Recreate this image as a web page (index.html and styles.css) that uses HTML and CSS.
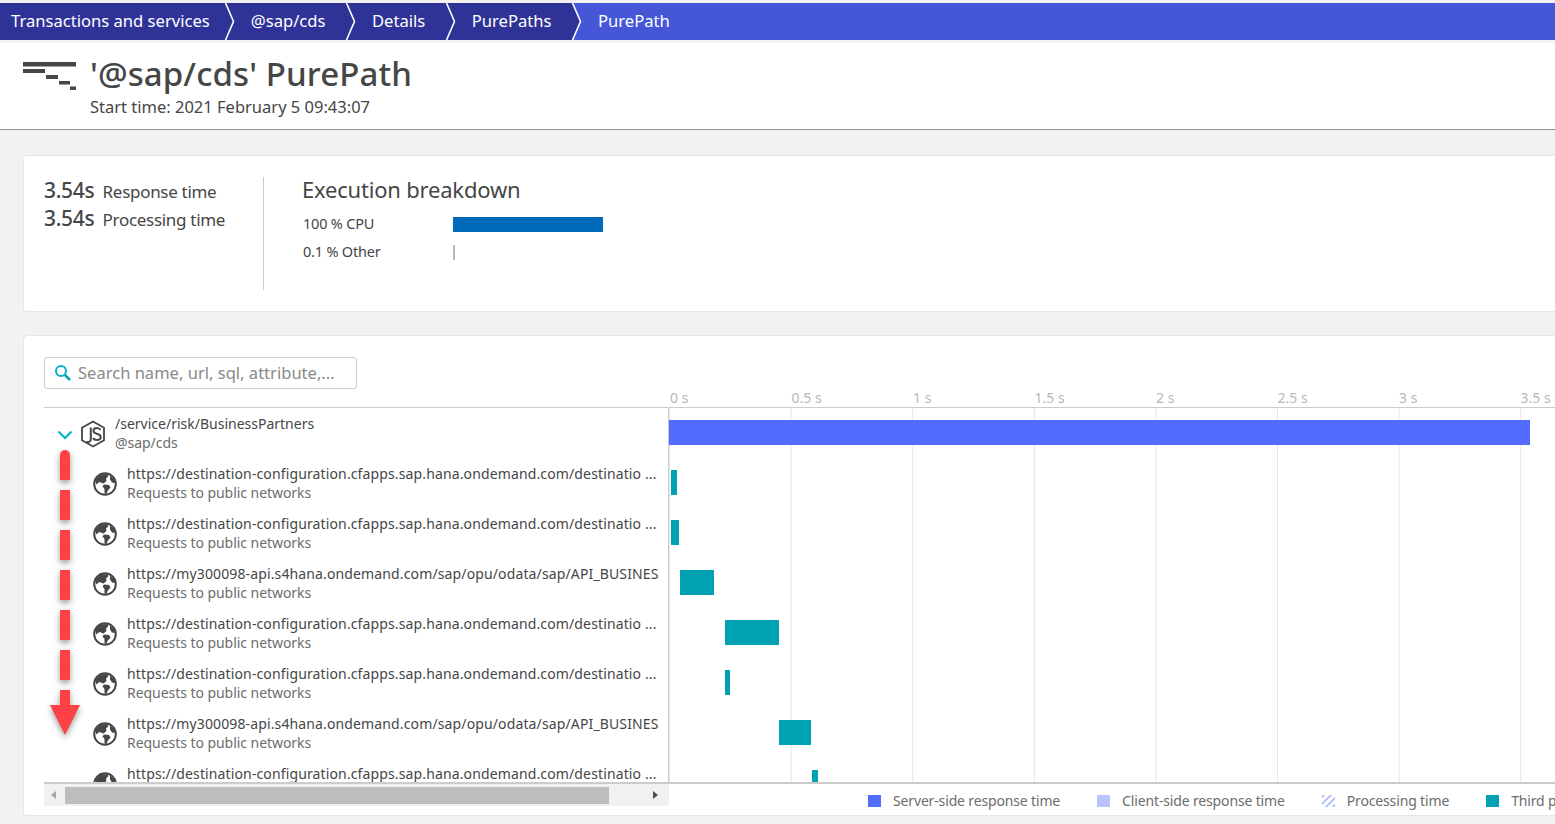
FILE: index.html
```html
<!DOCTYPE html>
<html lang="en">
<head>
    <meta charset="UTF-8">
    <meta name="viewport" content="width=device-width, initial-scale=1.0">
    <title>PurePath</title>
    <link rel="stylesheet" href="styles.css">
</head>
<body>
    <svg class="defs" width="0" height="0">
        <symbol id="globe" viewBox="0 0 24 24">
            <circle cx="12" cy="12" r="10.8" fill="#fff" stroke="#454646" stroke-width="2"/>
            <path fill="#454646" d="M8 2.5 L14 2 L15.5 4 L13 6.5 L13.5 9 L10.5 11.5 L6.5 10 L3 12.5 L2.5 8 L5 4.5Z M11 12.5 L16 13 L17.5 15.5 L14.5 19 L13.5 22 L11.5 21.5 L11.5 17 L9.5 14.5Z M17 3.5 L21 7 L22 11 L19 10.5 L17 7.5Z"/>
        </symbol>
        <symbol id="crumb-sep" viewBox="0 0 11 37">
            <path d="M0 0 H1.5 L9.5 18.5 L1.5 37 H0Z" fill="#2f3398"/>
            <path d="M1.5 0 L9.5 18.5 L1.5 37" fill="none" stroke="#fff" stroke-width="1.6"/>
        </symbol>
    </svg>

    <nav class="breadcrumb">
        <a class="crumb first">Transactions and services</a>
        <svg class="crumb-sep" width="11" height="37"><use href="#crumb-sep"/></svg>
        <a class="crumb">@sap/cds</a>
        <svg class="crumb-sep" width="11" height="37"><use href="#crumb-sep"/></svg>
        <a class="crumb">Details</a>
        <svg class="crumb-sep" width="11" height="37"><use href="#crumb-sep"/></svg>
        <a class="crumb">PurePaths</a>
        <svg class="crumb-sep last" width="11" height="37"><use href="#crumb-sep"/></svg>
        <a class="crumb current">PurePath</a>
    </nav>

    <header class="page-header">
        <svg class="header-icon" width="54" height="30" viewBox="0 0 54 30">
            <rect x="0" y="0" width="53" height="4.5" fill="#454646"/>
            <rect x="0" y="7" width="22" height="4" fill="#454646"/>
            <rect x="23" y="13" width="12" height="4" fill="#454646"/>
            <rect x="36" y="19" width="11" height="3.5" fill="#454646"/>
            <rect x="47" y="24.5" width="6" height="3.5" fill="#454646"/>
        </svg>
        <div>
            <h1>'@sap/cds' PurePath</h1>
            <p class="start-time">Start time: 2021 February 5 09:43:07</p>
        </div>
    </header>

    <main class="content">
        <section class="card summary">
            <div class="times">
                <div class="time-row"><b>3.54s</b> Response time</div>
                <div class="time-row"><b>3.54s</b> Processing time</div>
            </div>
            <div class="breakdown">
                <h2>Execution breakdown</h2>
                <div class="breakdown-row">
                    <span class="breakdown-label">100 % CPU</span>
                    <span class="breakdown-bar cpu"></span>
                </div>
                <div class="breakdown-row">
                    <span class="breakdown-label">0.1 % Other</span>
                    <span class="breakdown-bar other"></span>
                </div>
            </div>
        </section>

        <section class="card tree-card">
            <div class="search">
                <svg width="18" height="18" viewBox="0 0 18 18">
                    <circle cx="7" cy="7" r="5" fill="none" stroke="#00b4c8" stroke-width="2"/>
                    <path d="M10.8 10.8 L16 16" stroke="#00a1b2" stroke-width="2.6"/>
                </svg>
                <span>Search name, url, sql, attribute,...</span>
            </div>

            <div class="tree-head">
                <div class="axis">
                    <span>0 s</span><span>0.5 s</span><span>1 s</span><span>1.5 s</span>
                    <span>2 s</span><span>2.5 s</span><span>3 s</span><span>3.5 s</span>
                </div>
            </div>

            <div class="tree">
                <div class="row root">
                    <div class="row-info">
                        <svg class="chevron" width="16" height="10" viewBox="0 0 16 10">
                            <path d="M1.5 1.5 L8 8 L14.5 1.5" fill="none" stroke="#00b4c8" stroke-width="2"/>
                        </svg>
                        <svg class="js-icon" width="26" height="28" viewBox="0 0 26 28">
                            <path d="M13 1.5 L24 7.7 L24 20.3 L13 26.5 L2 20.3 L2 7.7Z" fill="none" stroke="#454646" stroke-width="1.8"/>
                            <path d="M10.8 7.5 V19 Q10.8 22.5 6.5 22" fill="none" stroke="#454646" stroke-width="2"/>
                            <path d="M20.5 10 Q19.5 8 16.8 8 Q13.5 8 13.5 10.8 Q13.5 13 16.8 13.8 Q20.7 14.6 20.7 17.2 Q20.7 20 16.8 20 Q14 20 13 18" fill="none" stroke="#454646" stroke-width="2"/>
                        </svg>
                        <div class="row-text">
                            <div class="row-title">/service/risk/BusinessPartners</div>
                            <div class="row-sub">@sap/cds</div>
                        </div>
                    </div>
                    <div class="row-chart"><span class="bar server" style="margin-left: 0px; width: 861px"></span></div>
                </div>

                <div class="row">
                    <div class="row-info">
                        <svg class="globe" width="24" height="24"><use href="#globe"/></svg>
                        <div class="row-text">
                            <div class="row-title url">https://destination-configuration.cfapps.sap.hana.ondemand.com/destinatio ...</div>
                            <div class="row-sub">Requests to public networks</div>
                        </div>
                    </div>
                    <div class="row-chart"><span class="bar third" style="margin-left: 2px; width: 6px"></span></div>
                </div>

                <div class="row">
                    <div class="row-info">
                        <svg class="globe" width="24" height="24"><use href="#globe"/></svg>
                        <div class="row-text">
                            <div class="row-title url">https://destination-configuration.cfapps.sap.hana.ondemand.com/destinatio ...</div>
                            <div class="row-sub">Requests to public networks</div>
                        </div>
                    </div>
                    <div class="row-chart"><span class="bar third" style="margin-left: 2px; width: 8px"></span></div>
                </div>

                <div class="row">
                    <div class="row-info">
                        <svg class="globe" width="24" height="24"><use href="#globe"/></svg>
                        <div class="row-text">
                            <div class="row-title url">https://my300098-api.s4hana.ondemand.com/sap/opu/odata/sap/API_BUSINES</div>
                            <div class="row-sub">Requests to public networks</div>
                        </div>
                    </div>
                    <div class="row-chart"><span class="bar third" style="margin-left: 11px; width: 34px"></span></div>
                </div>

                <div class="row">
                    <div class="row-info">
                        <svg class="globe" width="24" height="24"><use href="#globe"/></svg>
                        <div class="row-text">
                            <div class="row-title url">https://destination-configuration.cfapps.sap.hana.ondemand.com/destinatio ...</div>
                            <div class="row-sub">Requests to public networks</div>
                        </div>
                    </div>
                    <div class="row-chart"><span class="bar third" style="margin-left: 56px; width: 54px"></span></div>
                </div>

                <div class="row">
                    <div class="row-info">
                        <svg class="globe" width="24" height="24"><use href="#globe"/></svg>
                        <div class="row-text">
                            <div class="row-title url">https://destination-configuration.cfapps.sap.hana.ondemand.com/destinatio ...</div>
                            <div class="row-sub">Requests to public networks</div>
                        </div>
                    </div>
                    <div class="row-chart"><span class="bar third" style="margin-left: 56px; width: 5px"></span></div>
                </div>

                <div class="row">
                    <div class="row-info">
                        <svg class="globe" width="24" height="24"><use href="#globe"/></svg>
                        <div class="row-text">
                            <div class="row-title url">https://my300098-api.s4hana.ondemand.com/sap/opu/odata/sap/API_BUSINES</div>
                            <div class="row-sub">Requests to public networks</div>
                        </div>
                    </div>
                    <div class="row-chart"><span class="bar third" style="margin-left: 110px; width: 32px"></span></div>
                </div>

                <!-- last row is cut by the scroll area, only its title shows -->
                <div class="row">
                    <div class="row-info">
                        <svg class="globe" width="24" height="24"><use href="#globe"/></svg>
                        <div class="row-text">
                            <div class="row-title url">https://destination-configuration.cfapps.sap.hana.ondemand.com/destinatio ...</div>
                        </div>
                    </div>
                    <div class="row-chart"><span class="bar third" style="margin-left: 143px; width: 6px"></span></div>
                </div>
            </div>

            <div class="tree-foot">
                <div class="scrollbar">
                    <span class="scroll-arrow left"></span>
                    <span class="scroll-thumb"></span>
                    <span class="scroll-arrow right"></span>
                </div>
                <div class="legend">
                    <span class="legend-item"><i class="swatch server"></i>Server-side response time</span>
                    <span class="legend-item"><i class="swatch client"></i>Client-side response time</span>
                    <span class="legend-item"><i class="swatch processing"></i>Processing time</span>
                    <span class="legend-item"><i class="swatch third"></i>Third p</span>
                </div>
            </div>
        </section>
    </main>

    <!-- Red arrow annotation drawn over the tree -->
    <svg class="annotation" width="50" height="300" viewBox="0 0 50 300">
        <g fill="#ff4045">
            <path d="M10 35 V10 A5 5 0 0 1 20 10 V35Z"/>
            <rect x="10" y="45" width="10" height="30"/>
            <rect x="10" y="85" width="10" height="30"/>
            <rect x="10" y="125" width="10" height="30"/>
            <rect x="10" y="165" width="10" height="30"/>
            <rect x="10" y="205" width="10" height="30"/>
            <path d="M10 245 H20 V260 H30 L15 290 L0 260 H10Z"/>
        </g>
    </svg>
</body>
</html>
```

FILE: styles.css
```css
body {
    margin: 0;
    height: 824px;
    overflow: hidden;
    background-color: #f2f2f2;
    font-family: "Noto Sans", "Open Sans", sans-serif;
    color: #454646;
    position: relative;
}
.defs {
    position: absolute;
}

/* breadcrumb */
.breadcrumb {
    display: flex;
    height: 37px;
    margin-top: 3px;
    background-color: #4556d7;
}
.crumb {
    display: flex;
    align-items: center;
    height: 35px;
    padding: 0 19.5px 2px 16px;
    color: #fff;
    font-size: 16.6px;
    background-color: #2f3398;
}
.crumb.first {
    padding-left: 11px;
    padding-right: 14px;
}
.crumb.current {
    background-color: transparent;
}
.crumb-sep {
    flex: none;
    background-color: #2f3398;
}
.crumb-sep.last {
    background-color: transparent;
}

/* page header */
.page-header {
    display: flex;
    align-items: flex-start;
    gap: 13px;
    height: 86px;
    margin-top: 3px;
    padding-left: 23px;
    background-color: #fff;
    border-bottom: 1px solid #8a8f94;
}
.header-icon {
    margin-top: 19px;
}
h1 {
    margin: 10px 0 0;
    font-size: 33px;
    font-weight: 500;
    line-height: 42px;
    letter-spacing: 0.1px;
}
.start-time {
    margin: 1px 0 0;
    font-size: 16.5px;
    line-height: 22px;
}

/* cards */
.content {
    padding: 25px 0 0 23px;
}
.card {
    background-color: #fff;
    border: 1px solid #e6e6e6;
    border-right: 0;
    border-radius: 4px 0 0 4px;
    box-sizing: border-box;
}
.summary {
    display: flex;
    height: 157px;
    padding-top: 21px;
    margin-bottom: 23px;
}
.times {
    width: 219px;
    height: 112px;
    padding: 1px 0 0 20px;
    border-right: 1px solid #ccc;
}
.time-row {
    height: 28px;
    font-size: 17px;
    line-height: 28px;
    letter-spacing: -0.3px;
}
.time-row b {
    font-size: 21px;
    font-weight: 500;
    line-height: 1;
    margin-right: 4px;
}
.breakdown {
    padding-left: 38px;
}
h2 {
    margin: -1px 0 15px;
    font-size: 22px;
    font-weight: 400;
    line-height: 26px;
    letter-spacing: -0.2px;
}
.breakdown-row {
    display: flex;
    align-items: center;
    height: 15px;
    margin-bottom: 13px;
    font-size: 14.5px;
    letter-spacing: -0.2px;
}
.breakdown-label {
    width: 150px;
    padding-left: 1px;
    margin-top: -4px;
}
.breakdown-bar {
    height: 15px;
}
.breakdown-bar.cpu {
    width: 150px;
    background-color: #006bb8;
}
.breakdown-bar.other {
    width: 2px;
    background-color: #b7b7b7;
}

/* tree */
.tree-card {
    height: 481px;
    padding: 21px 0 0 20px;
}
.search {
    display: flex;
    align-items: center;
    gap: 6px;
    width: 313px;
    height: 32px;
    padding: 0 0 2px 9px;
    box-sizing: border-box;
    border: 1px solid #ccc;
    border-radius: 3px;
    color: #898989;
    font-size: 16.5px;
    letter-spacing: 0.02px;
}
.search svg {
    margin-top: 2px;
}
.tree-head {
    height: 18px;
    border-bottom: 1px solid #ccc;
}
.axis {
    display: flex;
    margin-left: 625px;
    color: #b7b7b7;
    font-size: 14px;
    line-height: 18px;
}
.axis span {
    flex: 0 0 121.5px;
    padding-left: 1px;
    box-sizing: border-box;
}
.tree {
    height: 374px;
    overflow: hidden;
    border-bottom: 2px solid #ccc;
}
.row {
    display: flex;
    height: 50px;
}
.row-info {
    display: flex;
    align-items: flex-start;
    width: 624px;
    flex: none;
    overflow: hidden;
}
.row .globe {
    flex: none;
    margin: 14px 10px 0 49px;
}
.chevron {
    flex: none;
    margin: 22px 0 0 13px;
}
.js-icon {
    flex: none;
    margin: 12px 9px 0 7px;
}
.row-text {
    min-width: 0;
    padding-top: 6px;
}
.row-title {
    font-size: 14px;
    line-height: 19px;
    white-space: nowrap;
}
.row-title.url {
    letter-spacing: 0.13px;
}
.row-sub {
    font-size: 14px;
    line-height: 19px;
    color: #6d6d6d;
    white-space: nowrap;
    letter-spacing: -0.05px;
}
.row-chart {
    flex: 1;
    height: 50px;
    padding-top: 12px;
    box-sizing: border-box;
    border-left: 1px solid #ccc;
    background-image: linear-gradient(to right, transparent 120.6px, #e6e6e6 120.6px, #e6e6e6 122px, transparent 122px);
    background-size: 121.6px 100%;
    background-position: 1px 0;
}
.bar {
    display: block;
    height: 25px;
}
.bar.server {
    background-color: #526cff;
}
.bar.third {
    background-color: #00a1b2;
}

/* scrollbar and legend */
.tree-foot {
    display: flex;
    height: 34px;
}
.scrollbar {
    display: flex;
    align-items: center;
    flex: none;
    width: 625px;
    height: 22px;
    background-color: #f1f1f1;
}
.scroll-thumb {
    width: 544px;
    height: 17px;
    margin-left: 2px;
    background-color: #bdbdbd;
}
.scroll-arrow {
    width: 0;
    height: 0;
    border-top: 4px solid transparent;
    border-bottom: 4px solid transparent;
}
.scroll-arrow.left {
    margin-left: 7px;
    margin-right: 7px;
    border-right: 5px solid #a3a3a3;
}
.scroll-arrow.right {
    margin-left: 44px;
    border-left: 5px solid #505050;
}
.legend {
    display: flex;
    flex: 1;
    overflow: hidden;
    white-space: nowrap;
    padding: 7px 0 0 199px;
    height: 19px;
    font-size: 14px;
    line-height: 19px;
    letter-spacing: -0.15px;
    color: #6d6d6d;
    gap: 37px;
}
.legend-item {
    display: flex;
    align-items: center;
    flex: none;
}
.swatch {
    width: 13px;
    height: 12px;
    margin-right: 12px;
}
.swatch.server {
    background-color: #526cff;
}
.swatch.client {
    background-color: #b9c4ff;
}
.swatch.processing {
    background-image: repeating-linear-gradient(135deg, #b9c4ff 0, #b9c4ff 2.5px, #fff 2.5px, #fff 5px);
}
.swatch.third {
    background-color: #00a1b2;
}

/* annotation sits on top of the tree */
.annotation {
    position: absolute;
    left: 50px;
    top: 445px;
    filter: drop-shadow(0 3px 3px rgba(0, 0, 0, 0.4));
}
```
